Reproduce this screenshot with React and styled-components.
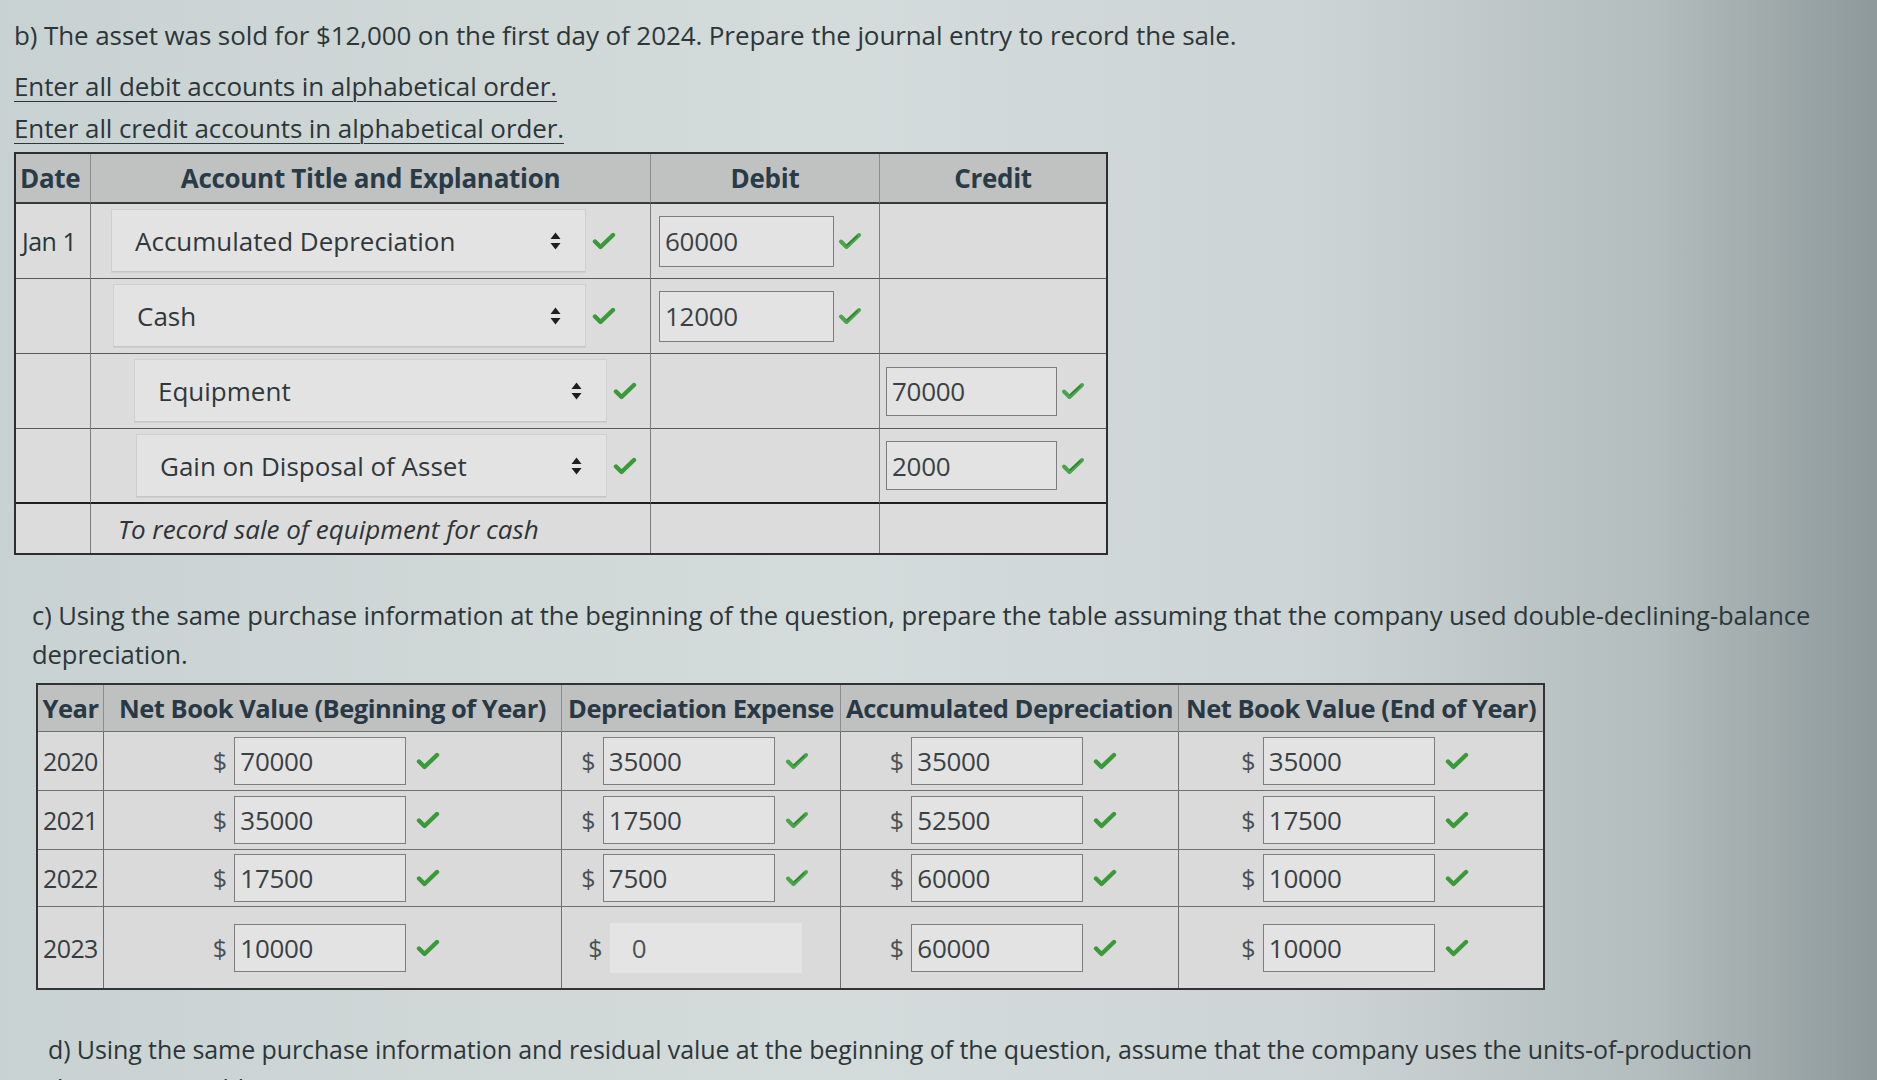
import React from 'react';
import styled, { createGlobalStyle } from 'styled-components';

const GlobalStyle = createGlobalStyle`
  html, body {
    margin: 0;
    padding: 0;
  }

  body {
    min-height: 1080px;
    overflow: hidden;
    background: linear-gradient(90deg, #c9d2d2 0%, #d4dbdb 45%, #cdd4d5 70%, #b3bdbe 88%, #8e999b 100%);
    font-family: 'Open Sans', 'Noto Sans', sans-serif;
    color: #2d3639;
  }
`;

const Page = styled.div`
  display: flex;
  flex-direction: column;
  padding-top: 16px;
`;

const Section = styled.section`
  display: flex;
  flex-direction: column;
  padding-left: ${p => p.$indent}px;
`;

const Prompt = styled.p`
  margin: ${p => p.$top || 0}px 0 0;
  font-size: ${p => p.$size || 26}px;
  line-height: 39px;
  letter-spacing: -0.1px;
  white-space: nowrap;
`;

const Instruction = styled.p`
  margin: ${p => p.$top}px 0 0;
  font-size: 26px;
  line-height: 40px;
  letter-spacing: -0.1px;
  text-decoration: underline;
  text-underline-offset: 5px;
  text-decoration-thickness: 1px;
`;

/* ---------- journal entry ---------- */

const Journal = styled.div`
  margin-top: 4px;
  width: 1090px;
  display: grid;
  grid-template-columns: 75px 560px 229px 226px;
  grid-template-rows: 50px 75px 75px 75px 75px 49px;
  border: 2px solid #2e2e2e;
  background: #dcdcdc;
`;

const HeadCell = styled.div`
  display: flex;
  align-items: center;
  justify-content: ${p => (p.$left ? 'flex-start' : 'center')};
  padding-left: ${p => (p.$left ? 4 : 0)}px;
  background: #c0c1c1;
  border-right: ${p => (p.$last ? 'none' : '1px solid #8d8d8d')};
  border-bottom: 2px solid #3a3a3a;
  font-size: 26px;
  font-weight: 700;
  letter-spacing: -0.3px;
  color: #293b47;
`;

const Cell = styled.div`
  display: flex;
  align-items: center;
  padding-left: ${p => p.$pad || 0}px;
  border-right: ${p => (p.$last ? 'none' : '1px solid #7f7f7f')};
  border-bottom: ${p => (p.$bottom ? 'none' : p.$heavy ? '2px solid #1f1f1f' : '1px solid #5a5a5a')};
  font-size: 26px;
`;

const DateText = styled.span`
  font-size: 25px;
  letter-spacing: -0.5px;
`;

const Select = styled.div`
  display: flex;
  align-items: center;
  justify-content: space-between;
  box-sizing: border-box;
  width: ${p => p.$width}px;
  height: 64px;
  padding: 0 24px 0 23px;
  background: #e3e3e3;
  border: 1px solid #cfcfcf;
  box-shadow: inset 0 -1px 0 #c5c5c5;
  font-size: 26px;
  color: #30383b;
`;

const Explanation = styled.span`
  font-style: italic;
  font-size: 26px;
  color: #2d3437;
`;

const Field = styled.div`
  display: flex;
  align-items: center;
  box-sizing: border-box;
  width: ${p => p.$width}px;
  height: ${p => p.$height || 50}px;
  padding-left: 5px;
  background: #e3e3e3;
  border: 1px solid #7d7d7d;
  font-size: 26px;
  letter-spacing: -0.3px;
  color: #3a4144;
`;

const Pair = styled.div`
  display: flex;
  align-items: center;
  gap: ${p => p.$gap || 6}px;
`;

/* ---------- depreciation table ---------- */

const Schedule = styled.div`
  margin-top: 9px;
  width: 1505px;
  display: grid;
  grid-template-columns: 66px 458px 279px 338px 364px;
  grid-template-rows: 47px 59px 59px 57px 81px;
  border: 2px solid #333;
  background: #dadada;
`;

const SHead = styled.div`
  display: flex;
  align-items: center;
  justify-content: center;
  background: #bfc0c0;
  border-right: ${p => (p.$last ? 'none' : '1px solid #8e8e8e')};
  border-bottom: 1px solid #6e6e6e;
  font-size: 25.5px;
  font-weight: 700;
  letter-spacing: -0.5px;
  white-space: nowrap;
  color: #283945;
`;

const SCell = styled.div`
  display: flex;
  align-items: center;
  justify-content: ${p => (p.$year ? 'flex-start' : 'center')};
  padding-left: ${p => (p.$year ? 5 : 0)}px;
  padding-right: ${p => (p.$year ? 0 : 12)}px;
  border-right: ${p => (p.$last ? 'none' : '1px solid #6f6f6f')};
  border-bottom: ${p => (p.$bottom ? 'none' : '1px solid #6f6f6f')};
  font-size: 25px;
  letter-spacing: -0.6px;
  color: #363d40;
`;

const Dollar = styled.span`
  font-size: 25px;
  color: #4a5154;
  margin-right: 2px;
`;

const Blank = styled.div`
  display: flex;
  align-items: center;
  box-sizing: border-box;
  width: 192px;
  height: 50px;
  padding-left: 22px;
  background: #e4e4e4;
  font-size: 26px;
  color: #4d5457;
`;

/* ---------- icons ---------- */

const Check = ({ faint }) => (
  <svg width="24" height="20" viewBox="0 0 24 20" aria-hidden="true">
    <path
      d="M3 10.5 L8.5 16 L21 4"
      fill="none"
      stroke={faint ? '#4aa54a' : '#3a9a3a'}
      strokeWidth={faint ? 4 : 4.4}
      strokeLinecap="round"
      strokeLinejoin="round"
    />
    {faint && (
      <path d="M9 14 L19 5" fill="none" stroke="#2e7d2e" strokeWidth="1.2" strokeLinecap="round" />
    )}
  </svg>
);

const Arrows = () => (
  <svg width="11" height="20" viewBox="0 0 11 20" aria-hidden="true">
    <path d="M0.5 8 L5.5 1.5 L10.5 8 Z" fill="#1e1e1e" />
    <path d="M0.5 12 L10.5 12 L5.5 18.5 Z" fill="#1e1e1e" />
  </svg>
);

const journalRows = [
  { date: 'Jan 1', account: 'Accumulated Depreciation', pad: 20, width: 475, debit: '60000' },
  { date: '', account: 'Cash', pad: 22, width: 473, debit: '12000' },
  { date: '', account: 'Equipment', pad: 43, width: 473, credit: '70000' },
  { date: '', account: 'Gain on Disposal of Asset', pad: 45, width: 471, credit: '2000' },
];

const scheduleRows = [
  { year: '2020', start: '70000', dep: '35000', acc: '35000', end: '35000' },
  { year: '2021', start: '35000', dep: '17500', acc: '52500', end: '17500' },
  { year: '2022', start: '17500', dep: '7500', acc: '60000', end: '10000' },
  { year: '2023', start: '10000', dep: null, acc: '60000', end: '10000' },
];

const Money = ({ value, faint }) => (
  <Pair $gap={10}>
    <Pair $gap={0}>
      <Dollar>$</Dollar>
      <Field $width={172} $height={48}>{value}</Field>
    </Pair>
    <Check faint={faint} />
  </Pair>
);

const App = () => (
  <Page>
    <GlobalStyle />

    <Section $indent={14}>
      <Prompt>
        b) The asset was sold for $12,000 on the first day of 2024. Prepare the journal entry to record the sale.
      </Prompt>
      <Instruction $top={11}>Enter all debit accounts in alphabetical order.</Instruction>
      <Instruction $top={2}>Enter all credit accounts in alphabetical order.</Instruction>

      <Journal>
        <HeadCell $left>Date</HeadCell>
        <HeadCell>Account Title and Explanation</HeadCell>
        <HeadCell>Debit</HeadCell>
        <HeadCell $last>Credit</HeadCell>

        {journalRows.map((row, i) => (
          <React.Fragment key={row.account}>
            <Cell $pad={6} $heavy={i === journalRows.length - 1}>
              <DateText>{row.date}</DateText>
            </Cell>
            <Cell $pad={row.pad} $heavy={i === journalRows.length - 1}>
              <Pair $gap={6}>
                <Select $width={row.width}>
                  <span>{row.account}</span>
                  <Arrows />
                </Select>
                <Check />
              </Pair>
            </Cell>
            <Cell $pad={8} $heavy={i === journalRows.length - 1}>
              {row.debit && (
                <Pair $gap={4}>
                  <Field $width={175} $height={51}>{row.debit}</Field>
                  <Check faint />
                </Pair>
              )}
            </Cell>
            <Cell $pad={6} $last $heavy={i === journalRows.length - 1}>
              {row.credit && (
                <Pair $gap={4}>
                  <Field $width={171} $height={49}>{row.credit}</Field>
                  <Check faint />
                </Pair>
              )}
            </Cell>
          </React.Fragment>
        ))}

        <Cell $bottom />
        <Cell $bottom $pad={27}>
          <Explanation>To record sale of equipment for cash</Explanation>
        </Cell>
        <Cell $bottom />
        <Cell $bottom $last />
      </Journal>
    </Section>

    <Section $indent={32}>
      <Prompt $top={41} $size={25.6}>
        c) Using the same purchase information at the beginning of the question, prepare the table assuming that the company used double-declining-balance
        <br />
        depreciation.
      </Prompt>
    </Section>

    <Section $indent={36}>
      <Schedule>
        <SHead>Year</SHead>
        <SHead>Net Book Value (Beginning of Year)</SHead>
        <SHead>Depreciation Expense</SHead>
        <SHead>Accumulated Depreciation</SHead>
        <SHead $last>Net Book Value (End of Year)</SHead>

        {scheduleRows.map((row, i) => {
          const bottom = i === scheduleRows.length - 1;
          return (
            <React.Fragment key={row.year}>
              <SCell $year $bottom={bottom}>{row.year}</SCell>
              <SCell $bottom={bottom}>
                <Money value={row.start} />
              </SCell>
              <SCell $bottom={bottom}>
                {row.dep ? (
                  <Money value={row.dep} faint />
                ) : (
                  <Pair $gap={0}>
                    <Dollar>$</Dollar>
                    <Blank>0</Blank>
                  </Pair>
                )}
              </SCell>
              <SCell $bottom={bottom}>
                <Money value={row.acc} />
              </SCell>
              <SCell $last $bottom={bottom}>
                <Money value={row.end} />
              </SCell>
            </React.Fragment>
          );
        })}
      </Schedule>
    </Section>

    <Section $indent={48}>
      <Prompt $top={40} $size={25}>
        d) Using the same purchase information and residual value at the beginning of the question, assume that the company uses the units-of-production
        <br />
        depreciation table.
      </Prompt>
    </Section>
  </Page>
);

export default App;
